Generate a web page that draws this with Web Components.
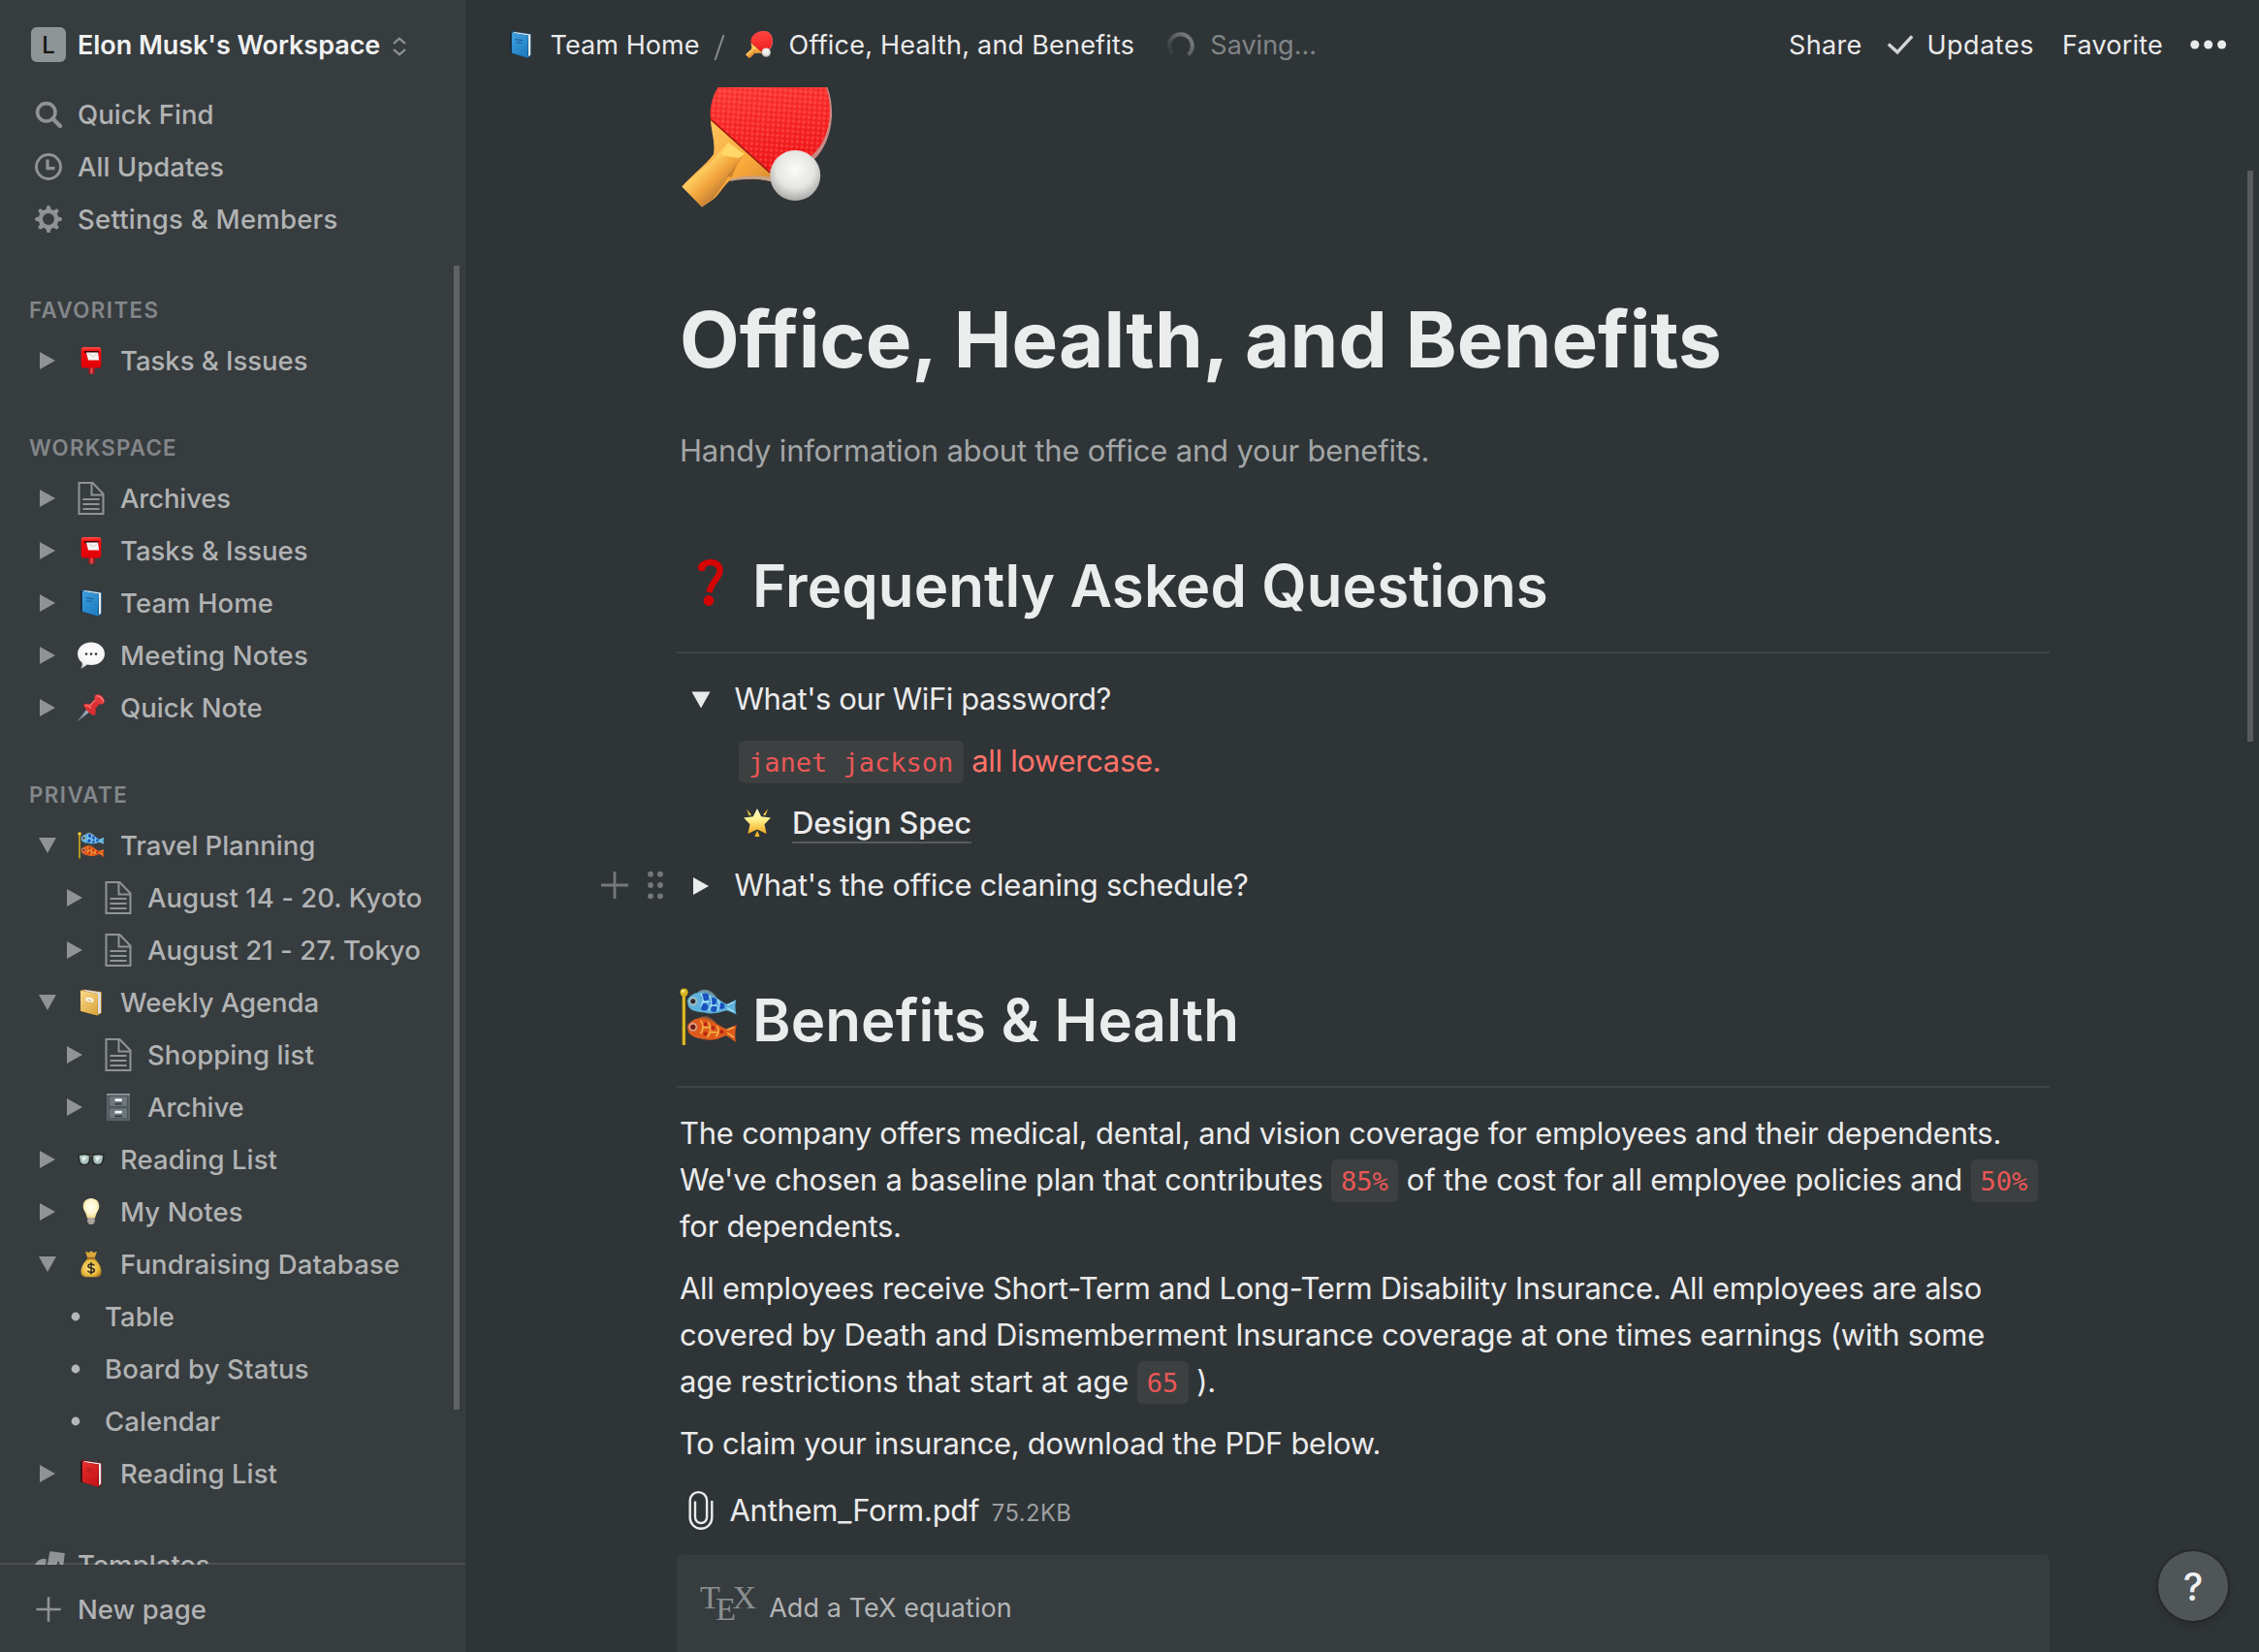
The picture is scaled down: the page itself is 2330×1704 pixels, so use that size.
<!DOCTYPE html>
<html lang="en">
<head>
<meta charset="utf-8">
<title>Office, Health, and Benefits</title>
<style>
html,body{margin:0;height:100%;background:#2f3437}
body{font-family:Inter,"Liberation Sans",sans-serif;font-weight:430;color:#eaebeb;overflow:hidden;font-kerning:normal}
</style>
</head>
<body>
<app-shell>
  <side-bar slot="side">
    <workspace-switcher slot="head" initial="L">Elon Musk's Workspace</workspace-switcher>
    <nav-item slot="head" kind="top" icon="search">Quick Find</nav-item>
    <nav-item slot="head" kind="top" icon="clock" style="--ls:.001em">All Updates</nav-item>
    <nav-item slot="head" kind="top" icon="gear" style="--ls:.009em">Settings &amp; Members</nav-item>

    <nav-section label="FAVORITES" style="--gap:52px">
      <nav-item icon="postbox" style="--ls:-.001em">Tasks &amp; Issues</nav-item>
    </nav-section>
    <nav-section label="WORKSPACE" style="--label-ls:.054em">
      <nav-item icon="doc" style="--ls:-.006em">Archives</nav-item>
      <nav-item icon="postbox" style="--ls:-.001em">Tasks &amp; Issues</nav-item>
      <nav-item icon="book-blue">Team Home</nav-item>
      <nav-item icon="speech" style="--ls:.005em">Meeting Notes</nav-item>
      <nav-item icon="pin">Quick Note</nav-item>
    </nav-section>
    <nav-section label="PRIVATE">
      <nav-item icon="fish" open style="--ls:-.001em">Travel Planning</nav-item>
      <nav-item icon="doc" level="1" style="--ls:.001em">August 14 - 20. Kyoto</nav-item>
      <nav-item icon="doc" level="1" style="--ls:.001em">August 21 - 27. Tokyo</nav-item>
      <nav-item icon="notebook" open style="--ls:-.002em">Weekly Agenda</nav-item>
      <nav-item icon="doc" level="1">Shopping list</nav-item>
      <nav-item icon="cabinet" level="1" style="--ls:-.004em">Archive</nav-item>
      <nav-item icon="glasses">Reading List</nav-item>
      <nav-item icon="bulb">My Notes</nav-item>
      <nav-item icon="moneybag" open style="--ls:.005em">Fundraising Database</nav-item>
      <nav-item kind="bullet">Table</nav-item>
      <nav-item kind="bullet" style="--ls:.006em">Board by Status</nav-item>
      <nav-item kind="bullet">Calendar</nav-item>
      <nav-item icon="book-red">Reading List</nav-item>
    </nav-section>
    <nav-item kind="top" icon="templates" style="margin-top:40px">Templates</nav-item>

    <nav-item slot="foot" kind="top" icon="plus" style="--ls:.001em">New page</nav-item>
  </side-bar>

  <top-bar slot="main"></top-bar>

  <page-body slot="main">
    <ui-icon name="paddle" size="156" style="margin:-32px 0 0 4px"></ui-icon>
    <page-title>Office, Health, and Benefits</page-title>
    <text-block class="muted" style="margin-top:43px;--ls:-.2px">Handy information about the office and your benefits.</text-block>

    <section-heading icon="question">Frequently Asked Questions</section-heading>
    <toggle-item open style="margin-top:23px;--ls:-.44px">What's our WiFi password?</toggle-item>
    <text-block class="red" style="margin-top:16px;padding-left:64px;--ls:-.31px"><inline-code>janet jackson</inline-code> all lowercase.</text-block>
    <page-link icon="star">Design Spec</page-link>
    <toggle-item handles style="margin-top:16px;--ls:-.29px">What's the office cleaning schedule?</toggle-item>

    <section-heading icon="fish">Benefits &amp; Health</section-heading>
    <text-block style="margin-top:23px">The company offers medical, dental, and vision coverage for employees and their dependents.<br>We've chosen a baseline plan that contributes <inline-code>85%</inline-code> of the cost for all employee policies and <inline-code>50%</inline-code><br>for dependents.</text-block>
    <text-block style="margin-top:16px"><span style="letter-spacing:-.275px">All employees receive Short-Term and Long-Term Disability Insurance. All employees are also</span><br><span style="letter-spacing:-.225px">covered by Death and Dismemberment Insurance coverage at one times earnings (with some</span><br><span style="letter-spacing:-.1px">age restrictions that start at age </span><inline-code>65</inline-code> ).</text-block>
    <text-block style="margin-top:16px;--ls:-.3px">To claim your insurance, download the PDF below.</text-block>
    <file-block size="75.2KB">Anthem_Form.pdf</file-block>
    <equation-block>Add a TeX equation</equation-block>
  </page-body>

  <help-button slot="main">?</help-button>
</app-shell>

<script>
/* Icon drawings: name -> [viewBox width, viewBox height, markup] */
const koinobori = `
<defs><linearGradient id="pole" x1="0" x2="1" y1="0" y2="0"><stop offset="0" stop-color="#8f7412"/><stop offset=".5" stop-color="#f4d532"/><stop offset="1" stop-color="#94750f"/></linearGradient></defs>
<rect x="2.400" y="3" width="4" height="57" rx="1" fill="url(#pole)"/><circle cx="4.600" cy="4.600" r="4.200" fill="#d8b41e"/><circle cx="3.600" cy="3.600" r="1.500" fill="#fff0a0"/>
<path d="M19 5C23 -1 35 1 40 12L30 14Z" fill="#6f8f9c"/>
<path d="M8 13C12 5 22 3 30 6C38 9 46 16 50 17C53 16 56 14 59.500 12C58 17 58 22 59.500 28C55 26 52 24 48 24C42 26 34 28 26 26C20 25 12 25 9 19Z" fill="#5db1da"/>
<g fill="#1a52bd"><circle cx="27" cy="9.500" r="4"/><circle cx="35" cy="14" r="3.800"/><circle cx="26" cy="20" r="3.800"/><circle cx="36" cy="22" r="3.200"/><circle cx="44" cy="19" r="3.200"/></g>
<g fill="none" stroke="#a9e4fb" stroke-width="1.300"><path d="M22 6q5 7 0 14M31 8q5 8-1 16M40 12q4 6-1 12M50 18l7-3M50 21l7 4M24 14.500h8M32 18.500h7"/></g>
<circle cx="14" cy="14" r="4.600" fill="#a4bec5"/><circle cx="14" cy="14" r="2.600" fill="#2e2a33"/>
<path d="M19 33C23 27 35 29 40 40L30 42Z" fill="#8c5a38"/>
<path d="M8 40C12 32 22 30 30 33C38 36 46 43 50 43C53 42 56 40 60 39C58 44 58 49 59 57C55 54 52 51 48 50C42 53 34 56 26 54C20 53 12 52 9 46Z" fill="#dd5a1c"/>
<g fill="none" stroke="#f7b645" stroke-width="1.500"><path d="M22 34q5 7 0 14M30 36q5 8-1 16M39 40q4 5-1 11M50 44l7-3M50 47l7 5M24 41.500h8M32 46.500h7"/></g>
<g fill="#b92212"><circle cx="27" cy="38" r="2"/><circle cx="35" cy="42" r="2"/><circle cx="27" cy="48" r="2"/><circle cx="44" cy="46" r="2"/></g>
<circle cx="14" cy="41" r="4.600" fill="#dc9a80"/><circle cx="14" cy="41" r="2.600" fill="#6e1a12"/>`;

const book = (a, b, c, spine) => `
<defs><linearGradient id="cv" x1="0" y1="0" x2=".6" y2="1"><stop offset="0" stop-color="${a}"/><stop offset="1" stop-color="${b}"/></linearGradient></defs>
<path d="M3 1.200L6 0L25 3V25.400L21.500 28L3.400 22.600Z" fill="${c}"/>
<path d="M7.500 .9L24.200 3.400V24.600L22 26.600V4.600L6 2Z" fill="#e8ebec"/>
<path d="M3 1.200L5 1.800V23L3.400 22.600Z" fill="${spine}"/>
<path d="M4.800 1.800L21.800 4.800L21.200 27.400L4.800 22.600Z" fill="url(#cv)"/>`;

const triRight = c => `<path d="M1 1L17 10L1 19Z" fill="${c}"/>`;
const triDown = c => `<path d="M0 1H18L9 17Z" fill="${c}"/>`;
const G = '#8f9396';

const ICONS = {
  paddle: [156, 156, `
<defs>
<linearGradient id="red" x1=".4" y1="0" x2=".6" y2="1"><stop offset="0" stop-color="#ff4740"/><stop offset=".5" stop-color="#fb2c2b"/><stop offset="1" stop-color="#ef1317"/></linearGradient>
<linearGradient id="wood" x1="0" y1="0" x2="1" y2="1"><stop offset="0" stop-color="#ffcf6b"/><stop offset=".6" stop-color="#f9a93a"/><stop offset="1" stop-color="#c97d2c"/></linearGradient>
<linearGradient id="grip" x1=".2" y1=".2" x2=".75" y2=".8"><stop offset="0" stop-color="#e9992f"/><stop offset=".3" stop-color="#ffcb60"/><stop offset=".6" stop-color="#f0a23a"/><stop offset="1" stop-color="#a86a35"/></linearGradient>
<radialGradient id="ball" cx=".5" cy=".38" r=".62"><stop offset="0" stop-color="#fbfbfa"/><stop offset=".6" stop-color="#e6e5e2"/><stop offset="1" stop-color="#a9a9a7"/></radialGradient>
<pattern id="pips" width="5.200" height="5.200" patternUnits="userSpaceOnUse" patternTransform="rotate(4)"><circle cx="1.400" cy="1.800" r="1.500" fill="#ff6a60" opacity=".45"/><circle cx="3.600" cy="3.800" r="1.200" fill="#c80f14" opacity=".3"/></pattern>
</defs>
<path d="M102 0C142 0 157 30 156 62C155 82 147 98 138 106L132 100Z" fill="#c98a86"/>
<path d="M31 65L93 120V129C76 125 61 127 51 128C44 134 38 145 33 148L22 155.500L1.500 134.500C10 124 26 112 34 101C36 88 31 76 31 65Z" fill="url(#wood)"/>
<path d="M51 127C61 124 76 122 93 125V129C76 125 61 127 51 129Z" fill="#c9a184"/>
<path d="M49 89L66 101C62 107 56 112 52 120C46 130 40 139 33 147L22 155.500L1.500 134.500C14 121 30 112 36 104C40 98 44 94 49 89Z" fill="url(#grip)"/>
<path d="M49 89L66 101L60 105L42 102Z" fill="#ffd869"/>
<path d="M66 101L48 124L53 125Q56 113 66 101Z" fill="#a9641f" opacity=".55"/>
<path d="M31 65C27 30 60 0 102 0C140 0 155 28 154 60C153 78 146 93 136 102L108 120H92L31 66Z" fill="url(#red)"/>
<path d="M31 65C27 30 60 0 102 0C140 0 155 28 154 60C153 78 146 93 136 102L108 120H92L31 66Z" fill="url(#pips)"/>
<path d="M31 65L92 120" stroke="#9c1c10" stroke-width="1.600"/>
<circle cx="118.200" cy="123" r="26" fill="url(#ball)"/>`],
  postbox: [28, 28, `
<defs><linearGradient id="pb" x1="0" y1="0" x2="0" y2="1"><stop offset="0" stop-color="#ff4d48"/><stop offset=".2" stop-color="#f20d10"/><stop offset="1" stop-color="#e00008"/></linearGradient></defs>
<path d="M11.500 20h6v7.500h-6z" fill="#b01318"/><path d="M13.500 21h2v6.500h-2z" fill="#e2565a"/>
<rect x="3.700" y="0" width="20.600" height="21.600" rx="2.800" fill="url(#pb)"/>
<path d="M7 4h14.500v2.200H7z" fill="#3a0506"/><path d="M9 5.400H21L22.200 13.600H11Z" fill="#f6f4f4"/><path d="M11 6.500l5 3.500 4.500-3.500" fill="none" stroke="#c9b9ba" stroke-width=".7"/>`],
  'book-blue': [28, 28, book('#3fa0e0', '#1f7fc2', '#174f7c', '#15202e') + '<path d="M8.500 8.500l7.500 1.300M9.500 11.500l5.500 1" stroke="#1d5f93" stroke-width="1.200"/>'],
  'book-red': [28, 28, book('#e8302c', '#c9151a', '#7c1012', '#1c1012') + '<path d="M8.500 8.500l7.500 1.300M9.500 11.500l5.500 1" stroke="#a01c1c" stroke-width="1.200"/>'],
  notebook: [28, 28, `
<defs><linearGradient id="nb" x1="0" y1="0" x2=".7" y2="1"><stop offset="0" stop-color="#fbd98a"/><stop offset="1" stop-color="#dca841"/></linearGradient></defs>
<path d="M3 1.500L6 .4L25 3V25L20.500 27.500L3 23Z" fill="#a97826"/><path d="M7 1L24 3.400V24.400L21 26.500V5L6 2Z" fill="#dfe0e0"/>
<path d="M3 1.700L21 5L20.400 27.500L3 22.800Z" fill="url(#nb)"/><path d="M8.500 9.200q4-1.200 7.800 1.200v3.200q-4 .7-7.800-1.300z" fill="#fffaf0"/><path d="M10.500 11.200l4 .8" stroke="#b9a06a" stroke-width=".9"/>`],
  speech: [28, 28, `
<defs><radialGradient id="sp" cx=".5" cy=".4" r=".62"><stop offset="0" stop-color="#fff"/><stop offset=".75" stop-color="#f3f3f3"/><stop offset="1" stop-color="#c4c6c8"/></radialGradient></defs>
<path d="M14 .5C22 .5 28 5.800 28 12.500S22 24 14 24C12.500 24 11 23.900 9.700 23.600C8 25.500 5.500 27.200 3 27.600C4.600 25.700 5 23.700 4.600 21.500C1.800 19.300 0 16.100 0 12.500C0 5.800 6 .5 14 .5Z" fill="url(#sp)"/>
<g fill="#3a3a3a"><circle cx="9" cy="12.600" r="1.300"/><circle cx="14" cy="12.600" r="1.300"/><circle cx="19" cy="12.600" r="1.300"/></g>`],
  pin: [28, 28, `
<path d="M0 28L10.500 14.500L13.500 17.200Z" fill="#a9bfcf"/><path d="M.3 27.500L12 15.800" stroke="#708494" stroke-width="1"/>
<path d="M6 10.500C9 9.300 12 9.800 13 10.200L18.500 4.500L23.500 9.500L18.300 15C19 17 19.200 19.500 17.500 22C13 21 7 15.500 6 10.500Z" fill="#dc2f31"/>
<path d="M18 1.500C20-.5 23 0 25.500 2.500S28.500 8 26.500 10C24.500 11.500 21.500 10 19.700 8.300S16.500 3.500 18 1.500Z" fill="#e23a3b"/>
<path d="M19.500 2C22 1 26 4.500 26.800 8" fill="none" stroke="#f98682" stroke-width="1.300"/><path d="M13 11.500L18.500 6M8 11.500q4 0 6 3" stroke="#f4706c" stroke-width="1.400" fill="none"/>`],
  fish: [61, 61, koinobori],
  cabinet: [28, 28, `
<rect x="2" y="0" width="24" height="28" rx=".8" fill="#5c666b"/><rect x="2" y="0" width="24" height="1.600" fill="#8f9aa0"/>
<rect x="4.500" y="2.600" width="19" height="10.800" fill="#6d777c" stroke="#454d52" stroke-width=".8"/><rect x="4.500" y="15" width="19" height="10.800" fill="#6d777c" stroke="#454d52" stroke-width=".8"/>
<path d="M10.500 5.300h7.200v2.800h-7.200zM10.500 17.800h7.200v2.800h-7.200z" fill="#f4f5f5"/><path d="M10.500 10h7.200v1.600h-7.200zM10.500 22.600h7.200v1.600h-7.200z" fill="#33393d"/>`],
  glasses: [28, 28, `
<g stroke="#23282a" stroke-width="1.500"><path d="M1 9.500Q7 7.300 12.500 9.500V14Q12 19.500 7.200 19.500Q2 19.500 1.600 13.500Z" fill="#a9c2ba"/><path d="M27 9.500Q21 7.300 15.500 9.500V14Q16 19.500 20.800 19.500Q26 19.500 26.400 13.500Z" fill="#a9c2ba"/></g>
<path d="M12.500 11Q14 9.500 15.500 11" fill="none" stroke="#5b4c40" stroke-width="1.400"/><path d="M4 11.500q3-1.500 6 0l-4 5zM18 11.500q3-1.500 6 0l-4 5z" fill="#dfeee8"/>`],
  bulb: [28, 28, `
<defs><radialGradient id="bl" cx=".5" cy=".45" r=".6"><stop offset="0" stop-color="#fffef2"/><stop offset=".6" stop-color="#fdf5cc"/><stop offset="1" stop-color="#eccf74"/></radialGradient></defs>
<path d="M14 0C19 0 22.300 3.600 22.300 8.200C22.300 12.500 19 14.500 18.300 20H9.700C9 14.500 5.700 12.500 5.700 8.200C5.700 3.600 9 0 14 0Z" fill="url(#bl)"/>
<path d="M10.300 20h7.400v4.500l-1.800 2.200h-3.800l-1.800-2.200z" fill="#b9b4ab"/><path d="M10.300 22h7.400M10.500 24.500h7" stroke="#857f76" stroke-width=".8"/>`],
  moneybag: [28, 28, `
<defs><radialGradient id="mb" cx=".45" cy=".5" r=".6"><stop offset="0" stop-color="#fbe189"/><stop offset=".7" stop-color="#e7b93c"/><stop offset="1" stop-color="#b07f1f"/></radialGradient></defs>
<path d="M8 1L11.500 2L14 .3L16.500 2L20 1L17.500 8H10.500Z" fill="#d8a93a"/>
<path d="M10.500 8.500H17.500C21 11 24.500 17 24.500 21.500C24.500 26 22.500 27.200 18 27.200H10C5.500 27.200 3.500 26 3.500 21.500C3.500 17 7 11 10.500 8.500Z" fill="url(#mb)"/>
<rect x="9.600" y="6.800" width="8.800" height="2.200" rx="1" fill="#a06c22"/>
<path d="M17.300 15.300C16.500 13.800 11 13.400 10.900 16C10.900 18.900 17.400 17.200 17.400 20.300C17.300 23.200 11.300 23 10.500 20.800M14 12V24.600" fill="none" stroke="#2f2a1c" stroke-width="1.500"/>`],
  star: [30, 30, `
<defs><linearGradient id="st" x1="0" y1="0" x2="0" y2="1"><stop offset="0" stop-color="#fffbd0"/><stop offset=".45" stop-color="#fef08a"/><stop offset="1" stop-color="#f3a91c"/></linearGradient></defs>
<path d="M15 1L19.200 9.200L29 10.500L22.500 17.200L24.600 27L15 22.500L5.400 27L7.500 17.200L1 10.500L10.800 9.200Z" fill="url(#st)"/>
<path d="M4 1.500L9 7.500L6.500 8.200ZM26 1.500L21 7.500L23.500 8.200Z" fill="#f6cf3c"/><path d="M15 23.800L17.600 29.500Q15 31 12.400 29.500Z" fill="#f4b62a"/>`],
  question: [60, 60, `
<path d="M21.500 15.500C24 7 41.500 6 41.500 17.500C41.500 25 33.500 27.500 30.500 40" fill="none" stroke="#d50404" stroke-width="6.400"/>
<circle cx="22.800" cy="14.500" r="3.800" fill="#d50404"/><circle cx="30" cy="48.500" r="5.400" fill="#d50404"/>`],
  search: [28, 28, `<g fill="none" stroke="${G}"><circle cx="11.800" cy="11.800" r="9.200" stroke-width="3.600"/><path d="M18.500 18.500L26 26" stroke-width="4.200" stroke-linecap="round"/></g>`],
  clock: [28, 28, `<g fill="none" stroke="${G}"><circle cx="14" cy="14" r="12.500" stroke-width="2.900"/><path d="M13 6.500V15.700H20.500" stroke-width="3.200"/></g>`],
  gear: [28, 28, `<circle cx="14" cy="14" r="8.200" fill="none" stroke="${G}" stroke-width="4.400"/><g fill="${G}">${[0,45,90,135,180,225,270,315].map(a => `<path transform="rotate(${a} 14 14)" d="M11.300 5L12.300 .6Q14-.4 15.700 .6L16.700 5Z"/>`).join('')}</g>`],
  plus: [28, 28, `<path d="M14 1.300V26.700M1.300 14H26.700" stroke="${G}" stroke-width="2.600"/>`],
  templates: [36, 32, `<circle cx="13" cy="19" r="9.200" fill="${G}"/><path d="M18.500 1L36 3.200L33.800 20L15.500 18Z" fill="${G}" stroke="#373c3f" stroke-width="2"/><path d="M28 12L33 21H24Z" fill="#373c3f"/>`],
  doc: [28, 34, `<g fill="none" stroke="${G}" stroke-width="2"><path d="M1.500 1H15.500L26.500 12.500V33H1.500Z"/><path d="M14.500 1V13.500H26.500"/><path d="M5.500 18H22.500M5.500 23H22.500M5.500 28H22.500"/></g>`],
  sort: [14, 20, `<g fill="none" stroke="${G}" stroke-width="2.300"><path d="M1 7L7 1.700L13 7M1 13L7 18.300L13 13"/></g>`],
  check: [28, 22, `<path d="M1.800 10.500L11 18.800L26.200 2.300" fill="none" stroke="#d3d4d4" stroke-width="3.400"/>`],
  dots: [37, 10, `<g fill="#eaebeb"><circle cx="4.800" cy="5" r="4.500"/><circle cx="18.700" cy="5" r="4.500"/><circle cx="32.600" cy="5" r="4.500"/></g>`],
  spinner: [30, 28, `<defs><linearGradient id="sg" x1="0" y1="1" x2=".9" y2=".3"><stop offset="0" stop-color="#6f7477" stop-opacity="0"/><stop offset="1" stop-color="#747879"/></linearGradient></defs><path d="M6.500 23A12 12 0 1 1 22.500 23.500" fill="none" stroke="url(#sg)" stroke-width="4"/>`],
  slash: [12, 28, `<path d="M10.500 1L1.500 27" stroke="#888c8e" stroke-width="2"/>`],
  grip: [14, 28, `<g fill="#74787a"><circle cx="2" cy="2.700" r="2.900"/><circle cx="12" cy="2.700" r="2.900"/><circle cx="2" cy="14" r="2.900"/><circle cx="12" cy="14" r="2.900"/><circle cx="2" cy="25.300" r="2.900"/><circle cx="12" cy="25.300" r="2.900"/></g>`],
  add: [28, 28, `<path d="M14 0V28M0 14H28" stroke="#74787a" stroke-width="2.800"/>`],
  clip: [26, 40, `<path d="M24.300 10V27.500A11.300 11.300 0 0 1 1.700 27.500V9.800A8.700 8.700 0 0 1 19.100 9.800V27A6 6 0 0 1 7 27V10.500" fill="none" stroke="#eaebeb" stroke-width="2.400"/>`],
  'tri-right': [18, 20, triRight(G)],
  'tri-down': [18, 18, triDown(G)],
  'tri-right-lg': [18, 20, triRight('#eaebeb')],
  'tri-down-lg': [20, 18, '<path d="M.5 .5H19.500L10 17.500Z" fill="#eaebeb"/>'],
  bullet: [10, 10, '<circle cx="5" cy="5" r="4.400" fill="#b4b6b7"/>']
};

/* Base class: puts the styles and the markup into an open shadow root */
class Part extends HTMLElement {
  connectedCallback() {
    if (this.shadowRoot) return;
    const t = document.createElement('template');
    t.innerHTML = `<style>${this.css()}</style>${this.html()}`;
    this.attachShadow({ mode: 'open' }).append(t.content.cloneNode(true));
  }
  css() { return ':host{display:block}'; }
  html() { return '<slot></slot>'; }
}
const define = (tag, css, html = () => '<slot></slot>') =>
  customElements.define(tag, class extends Part {
    css() { return typeof css === 'function' ? css(this) : css; }
    html() { return html(this); }
  });

define('ui-icon', ':host{display:block;flex:none}svg{display:block;overflow:visible}', el => {
  const [w, h, body] = ICONS[el.getAttribute('name')];
  const k = el.hasAttribute('size') ? el.getAttribute('size') / Math.max(w, h) : 1;
  return `<svg width="${w * k}" height="${h * k}" viewBox="0 0 ${w} ${h}">${body}</svg>`;
});

define('app-shell', `
:host{display:flex;width:100%;height:100vh}
.side{flex:none;width:480px;height:100%;background:#373c3f}
main{position:relative;flex:1;min-width:0;display:flex;flex-direction:column;background:#2f3437;overflow:hidden}
.bar{position:absolute;right:6px;top:176px;width:6px;height:589px;background:#585b5d}`,
() => '<div class="side"><slot name="side"></slot></div><main><slot name="main"></slot><div class="bar"></div></main>');

define('side-bar', `
:host{position:relative;display:flex;flex-direction:column;height:100%}
.list{flex:1;min-height:0;overflow:hidden}
.foot{position:relative;flex:none;height:90px;display:flex;flex-direction:column;justify-content:center;box-sizing:border-box;padding-top:3px;box-shadow:0 -2px 0 rgba(255,255,255,.1)}
.bar{position:absolute;right:6px;top:274px;width:6px;height:1180px;background:#5f6263}`,
() => '<slot name="head"></slot><div class="list"><slot></slot></div><div class="foot"><slot name="foot"></slot></div><div class="bar"></div>');

define('workspace-switcher', `
:host{display:flex;align-items:center;height:92px;padding-left:32px;font-size:27px;font-weight:600;letter-spacing:-.002em;color:#f0f1f1;white-space:nowrap}
.tile{flex:none;display:grid;place-items:center;width:36px;height:36px;margin-right:12px;border-radius:6px;background:#8f9497;color:#141414;font-size:24px;font-weight:500}
ui-icon{margin:3px 0 0 13px}`,
el => `<span class="tile">${el.getAttribute('initial')}</span><slot></slot><ui-icon name="sort"></ui-icon>`);

define('nav-section', `
:host{display:block}
.label{padding:var(--gap,48px) 0 13px 30px;font-size:22.3px;line-height:27px;font-weight:600;letter-spacing:var(--label-ls,.064em);color:#83878a}`,
el => `<div class="label">${el.getAttribute('label')}</div><slot></slot>`);

define('nav-item', el => {
  const level = +(el.getAttribute('level') || 0);
  const pad = el.getAttribute('kind') === 'bullet' ? 60 : 32 + level * 28;
  return `
:host{display:flex;align-items:center;height:54px;box-sizing:border-box;flex:none;padding:0 0 2px ${pad}px;font-size:27.500px;font-weight:540;letter-spacing:var(--ls,.003em);color:#b1b3b4;white-space:nowrap}
.cell{flex:none;width:36px;display:flex;justify-content:center}
.tri{margin:0 9px 0 -1px}
.icon{margin-right:12px}`;
}, el => {
  const kind = el.getAttribute('kind');
  if (kind === 'bullet') return '<span class="cell icon"><ui-icon name="bullet"></ui-icon></span><slot></slot>';
  const n = el.getAttribute('icon');
  const size = n === 'fish' ? ' size="28"' : '';
  const icon = `<span class="cell icon"><ui-icon name="${n}"${size}></ui-icon></span>`;
  if (kind === 'top') return icon + '<slot></slot>';
  return `<span class="cell tri"><ui-icon name="tri-${el.hasAttribute('open') ? 'down' : 'right'}"></ui-icon></span>${icon}<slot></slot>`;
});

define('top-bar', `
:host{flex:none;display:flex;align-items:center;height:90px;box-sizing:border-box;padding:3px 34px 0 39px;font-size:27px;color:#eaebeb;white-space:nowrap}
.cell{flex:none;width:36px;display:flex;justify-content:center;margin-right:12.500px}
.slash{margin:4px 17px 0 14.500px}
.spin{margin:0 15px 0 33px}
.muted{color:#808486}
.grow{flex:1}
ui-icon{margin-bottom:2px}`,
() => `
<span class="cell"><ui-icon name="book-blue"></ui-icon></span><span style="letter-spacing:.003em">Team Home</span>
<ui-icon class="slash" name="slash"></ui-icon>
<span class="cell"><ui-icon name="paddle" size="28"></ui-icon></span><span style="letter-spacing:.008em">Office, Health, and Benefits</span>
<ui-icon class="spin" name="spinner"></ui-icon><span class="muted">Saving...</span>
<span class="grow"></span>
<span style="letter-spacing:.011em;margin-right:26px">Share</span>
<ui-icon name="check" style="margin-right:13px"></ui-icon>
<span style="letter-spacing:.019em;margin-right:29px">Updates</span>
<span style="letter-spacing:.008em;margin-right:28px">Favorite</span>
<ui-icon name="dots"></ui-icon>`);

define('page-body', ':host{flex:1;min-height:0;width:1416px;overflow:hidden;padding-left:80px;margin-left:138px;display:block}');

define('page-title', ':host{display:block;margin-top:88px;padding-left:3px;font-size:80px;line-height:96px;font-weight:700;letter-spacing:.0006em;white-space:nowrap;color:#ebecec}');

define('section-heading', `
:host{display:block;margin-top:77px;border-bottom:2px solid #3f4447;padding-bottom:30px}
.row{display:flex;align-items:center;height:76px;padding-left:3px;font-size:60px;line-height:76px;font-weight:600;letter-spacing:.002em;white-space:nowrap;color:#ebecec}
ui-icon{margin:0 15px 7px 0}`,
el => `<div class="row"><ui-icon name="${el.getAttribute('icon')}" size="60"></ui-icon><slot></slot></div>`);

define('text-block', `
:host{display:block;padding-left:3px;font-size:31px;line-height:48px;letter-spacing:var(--ls,-.245px);white-space:nowrap}
:host(.muted){color:#a3a6a7}
:host(.red){color:#ff7369}`);

define('inline-code', ':host{display:inline;font-family:"DejaVu Sans Mono","Liberation Mono",monospace;font-size:27px;font-weight:400;line-height:1;letter-spacing:0;color:#eb5757;background:#3c4040;border-radius:6px;padding:7px 10.500px 6px 10px}');

define('toggle-item', el => `
:host{display:flex;align-items:center;height:48px;margin-left:${el.hasAttribute('handles') ? -78 : 7}px;font-size:31px;line-height:48px;letter-spacing:var(--ls);white-space:nowrap}
.add{margin-right:21px}
.grip{margin-right:22px}
.cell{flex:none;width:36px;display:flex;justify-content:center;margin-right:16.500px;padding-top:1px}`,
el => `${el.hasAttribute('handles') ? '<ui-icon class="add" name="add"></ui-icon><ui-icon class="grip" name="grip"></ui-icon>' : ''}
<span class="cell"><ui-icon name="tri-${el.hasAttribute('open') ? 'down' : 'right'}-lg"></ui-icon></span><slot></slot>`);

define('page-link', `
:host{display:flex;align-items:center;height:48px;margin-top:16px;padding-left:68px;font-size:31px;line-height:48px;font-weight:540;letter-spacing:-.004em;white-space:nowrap}
ui-icon{margin:0 21px 3px 0}
span span{border-bottom:2px solid #585c5f;padding-bottom:1px}`,
el => `<ui-icon name="${el.getAttribute('icon')}"></ui-icon><span><span><slot></slot></span></span>`);

define('file-block', `
:host{display:flex;align-items:baseline;height:48px;margin-top:21px;padding-left:12px;font-size:31px;line-height:48px;letter-spacing:-.28px;white-space:nowrap}
ui-icon{align-self:center;margin-right:16.500px}
small{margin-left:12.500px;font-size:23.800px;letter-spacing:.018em;color:#9da0a1}`,
el => `<ui-icon name="clip"></ui-icon><slot></slot><small>${el.getAttribute('size')}</small>`);

define('equation-block', `
:host{display:flex;align-items:center;width:1416px;height:108px;box-sizing:border-box;margin-top:22px;padding:0 0 0 24px;border-radius:6px;background:#373c3f;font-size:27px;letter-spacing:.003em;color:#b3b5b6;white-space:nowrap}
.tex{font:34px/48px "Liberation Serif",serif;color:#8b8f91;letter-spacing:0;margin-right:13px;padding-bottom:15px}
.e{display:inline-block;line-height:1;margin:0 -3.500px 0 -4.500px;vertical-align:-12px}`,
() => '<span class="tex">T<span class="e">E</span>X</span><slot></slot>');

define('help-button', `
:host{position:absolute;right:32px;bottom:32px;width:72px;height:72px;border-radius:50%;display:grid;place-items:center;background:#505558;color:#f0f1f1;font-size:39px;font-weight:500;box-shadow:0 0 0 2px rgba(15,15,15,.2),0 4px 8px rgba(15,15,15,.2)}`);
</script>
</body>
</html>
